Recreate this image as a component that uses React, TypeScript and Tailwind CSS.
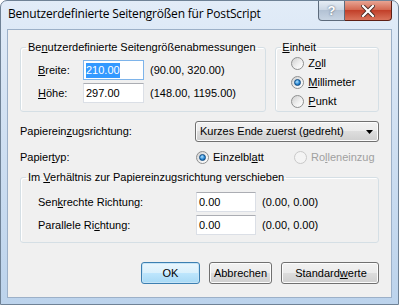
import type { ReactNode } from "react";

const Radio = ({ checked, disabled }: { checked?: boolean; disabled?: boolean }) => (
  <span
    className={
      "w-[13px] h-[13px] rounded-full border flex items-center justify-center shrink-0 " +
      (disabled
        ? "border-[#c9c9c9] bg-[#f4f4f4]"
        : "border-[#8e8f8f] bg-[linear-gradient(135deg,#cfcfcf,#f2f2f2_60%,#ffffff)]")
    }
  >
    {checked && (
      <span className="w-[7px] h-[7px] rounded-full border border-[#0d4a82] bg-[radial-gradient(circle_at_40%_35%,#b6e4ff,#2b8ad6_55%,#0f4f8c)]" />
    )}
  </span>
);

const RadioItem = ({ label, checked, disabled }: { label: ReactNode; checked?: boolean; disabled?: boolean }) => (
  <div className="flex items-center h-[19px]">
    <Radio checked={checked} disabled={disabled} />
    <span className={"ml-[4px] " + (disabled ? "text-[#a0a0a0]" : "")}>{label}</span>
  </div>
);

const TextBox = ({ value, focused, width }: { value: string; focused?: boolean; width: string }) => (
  <div
    className={
      width +
      " h-[20px] border flex items-center pl-[2px] bg-white " +
      (focused ? "border-[#7eb4ea]" : "border-[#dbdfe6] border-t-[#abadb3]")
    }
  >
    {focused ? <span className="bg-[#3399ff] text-white leading-[15px]">{value}</span> : <span>{value}</span>}
  </div>
);

const Button = ({ children, width, primary }: { children: ReactNode; width: string; primary?: boolean }) => (
  <div
    className={
      width +
      " h-[22px] rounded-[3px] border flex items-center justify-center " +
      (primary
        ? "border-[#3c7fb1] bg-[linear-gradient(#eaf6fd,#d9f0fc_50%,#bee6fd_50%,#a7d9f5)] shadow-[inset_0_0_0_1px_#c5e4f7]"
        : "border-[#707070] bg-[linear-gradient(#f2f2f2,#ebebeb_50%,#dddddd_50%,#cfcfcf)] shadow-[inset_0_0_0_1px_#fcfcfc]")
    }
  >
    {children}
  </div>
);

const App = () => {
  return (
    <div className="w-[399px] h-[305px] flex flex-col border border-[#6f8296] rounded-t-[7px] bg-[linear-gradient(180deg,#e2ecf8_0%,#d3e2f3_35%,#bcd3ec_100%)] font-['Liberation_Sans',Arial,sans-serif] text-[11px] text-black overflow-hidden">
      {/* title bar */}
      <div className="h-[28px] flex items-start">
        <div className="flex-1 pl-[7px] pt-[5px] text-[12px] leading-[16px] font-['Open_Sans',sans-serif] tracking-[-0.2px]">
          Benutzerdefinierte Seitengrößen für PostScript
        </div>
        <div className="flex mr-[6px]">
          <div className="w-[27px] h-[20px] border border-[#5d6b7c] border-t-0 rounded-bl-[4px] bg-[linear-gradient(#e6edf5,#c9d5e3_50%,#b3c2d4_50%,#c7d4e3)] flex items-center justify-center text-[13px] font-bold text-white [text-shadow:0_0_2px_#3c4c60]">
            ?
          </div>
          <div className="w-[47px] h-[20px] border border-[#5e1f15] border-t-0 border-l-0 rounded-br-[4px] bg-[linear-gradient(#e8a493,#d46a53_45%,#c2402a_50%,#d9735b)] flex items-center justify-center">
            <svg width="14" height="12" viewBox="0 0 14 12">
              <path d="M2 1 L12 11 M12 1 L2 11" stroke="#4a2a24" strokeWidth="4" strokeLinecap="square" />
              <path d="M2 1 L12 11 M12 1 L2 11" stroke="#ffffff" strokeWidth="2.2" strokeLinecap="square" />
            </svg>
          </div>
        </div>
      </div>

      {/* client area */}
      <div className="mx-[6px] mb-[6px] flex-1 border border-[#9cb0c8] bg-[#f0f0f0] px-[12px] pt-[11px] flex flex-col">
        <div className="flex gap-[9px]">
          <fieldset className="w-[247px] border border-[#d5dfe5] rounded-[3px] shadow-[inset_1px_1px_0_#fff]">
            <legend className="ml-[5px] px-[2px] leading-[13px]">
              Be<u>n</u>utzerdefinierte Seitengrößenabmessungen
            </legend>
            <div className="pl-[17px] pt-[6px] pb-[8px] flex flex-col gap-[3px]">
              <div className="flex items-center">
                <span className="w-[45px]">
                  <u>B</u>reite:
                </span>
                <TextBox value="210.00" focused width="w-[61px]" />
                <span className="ml-[6px]">(90.00, 320.00)</span>
              </div>
              <div className="flex items-center">
                <span className="w-[45px]">
                  <u>H</u>öhe:
                </span>
                <TextBox value="297.00" width="w-[61px]" />
                <span className="ml-[6px]">(148.00, 1195.00)</span>
              </div>
            </div>
          </fieldset>

          <fieldset className="w-[104px] border border-[#d5dfe5] rounded-[3px] shadow-[inset_1px_1px_0_#fff]">
            <legend className="ml-[5px] px-[1px] leading-[13px]">
              <u>E</u>inheit
            </legend>
            <div className="pl-[15px] flex flex-col">
              <RadioItem label={<>Z<u>o</u>ll</>} />
              <RadioItem label={<><u>M</u>illimeter</>} checked />
              <RadioItem label={<><u>P</u>unkt</>} />
            </div>
          </fieldset>
        </div>

        <div className="flex items-center mt-[9px] h-[21px]">
          <span className="w-[176px]">
            Papierein<u>z</u>ugsrichtung:
          </span>
          <div className="w-[185px] h-[21px] rounded-[3px] border border-[#707070] bg-[linear-gradient(#f2f2f2,#ebebeb_50%,#dddddd_50%,#cfcfcf)] shadow-[inset_0_0_0_1px_#fcfcfc] flex items-center pl-[4px] pr-[5px]">
            <span className="flex-1">Kurzes Ende zuerst (gedreht)</span>
            <svg width="7" height="4" viewBox="0 0 7 4">
              <path d="M0 0 H7 L3.5 4 Z" fill="#000" />
            </svg>
          </div>
        </div>

        <div className="flex items-center mt-[5px] h-[20px]">
          <span className="w-[176px]">
            Papier<u>t</u>yp:
          </span>
          <div className="w-[98px]">
            <RadioItem label={<>Einzelbl<u>a</u>tt</>} checked />
          </div>
          <RadioItem label={<>Ro<u>l</u>leneinzug</>} disabled />
        </div>

        <fieldset className="mt-[4px] border border-[#d5dfe5] rounded-[3px] shadow-[inset_1px_1px_0_#fff]">
          <legend className="ml-[5px] px-[2px] leading-[13px]">
            Im <u>V</u>erhältnis zur Papiereinzugsrichtung verschieben
          </legend>
          <div className="pl-[17px] pt-[8px] pb-[7px] flex flex-col gap-[3px]">
            <div className="flex items-center">
              <span className="w-[158px]">
                Sen<u>k</u>rechte Richtung:
              </span>
              <TextBox value="0.00" width="w-[60px]" />
              <span className="ml-[6px]">(0.00, 0.00)</span>
            </div>
            <div className="flex items-center">
              <span className="w-[158px]">
                Parallele Ri<u>c</u>htung:
              </span>
              <TextBox value="0.00" width="w-[60px]" />
              <span className="ml-[6px]">(0.00, 0.00)</span>
            </div>
          </div>
        </fieldset>

        <div className="flex justify-end mt-[19px] gap-[9px]">
          <Button width="w-[59px]" primary>
            OK
          </Button>
          <Button width="w-[63px]">Abbrechen</Button>
          <Button width="w-[98px]">
            <span className="ml-[2px]">
              Standard<u>w</u>erte
            </span>
          </Button>
        </div>
      </div>
    </div>
  );
};

export default App;
